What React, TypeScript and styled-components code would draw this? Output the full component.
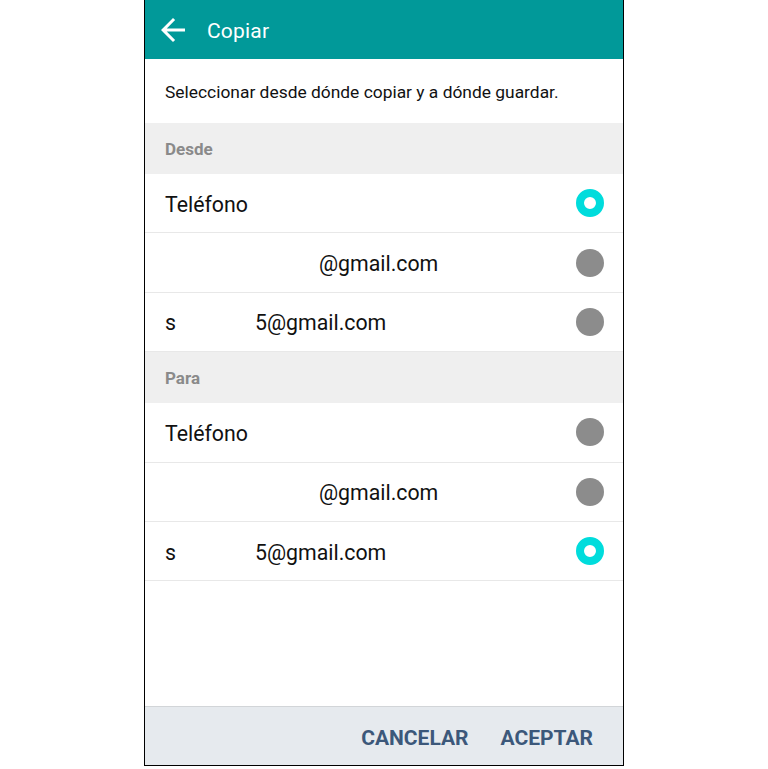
import React, { useState } from 'react';
import styled, { createGlobalStyle } from 'styled-components';

const GlobalStyle = createGlobalStyle`
  html, body {
    margin: 0;
    padding: 0;
    background: #fff;
    font-family: Roboto, "Noto Sans", Arial, sans-serif;
  }
`;

const Frame = styled.div`
  box-sizing: border-box;
  width: 480px;
  height: 766px;
  margin-left: 144px;
  border: 1px solid #000;
  border-top: none;
  display: flex;
  flex-direction: column;
  background: #fff;
`;

const TopBar = styled.header`
  height: 59px;
  background: #019999;
  display: flex;
  align-items: center;
  padding-left: 10px;
  color: #fff;
  flex-shrink: 0;
`;

const BackButton = styled.button`
  border: none;
  background: none;
  padding: 0;
  width: 36px;
  height: 36px;
  display: flex;
  color: #fff;
`;

const Title = styled.h1`
  margin: 2px 0 0 16px;
  font-size: 21px;
  font-weight: 400;
  letter-spacing: 0.2px;
`;

const Intro = styled.p`
  margin: 0;
  height: 64px;
  padding: 1px 20px 0;
  box-sizing: border-box;
  display: flex;
  align-items: center;
  font-size: 17.4px;
  color: #111;
  flex-shrink: 0;
`;

const SectionHeader = styled.div`
  height: 51px;
  background: #efefef;
  padding: 0 20px;
  display: flex;
  align-items: center;
  font-size: 17px;
  font-weight: 700;
  color: #8a8a8a;
  flex-shrink: 0;
`;

const Row = styled.label`
  box-sizing: border-box;
  height: 59.4px;
  border-bottom: 1px solid #e8e8e8;
  padding: 0 19px 0 20px;
  display: flex;
  align-items: center;
  justify-content: space-between;
  font-size: 21.3px;
  color: #111;
  cursor: pointer;
  flex-shrink: 0;
`;

const RowLabel = styled.span`
  padding-top: 2px;
`;

const Redacted = styled.span<{ $w: number }>`
  display: inline-block;
  width: ${({ $w }) => $w}px;
`;

const Radio = styled.span<{ $on: boolean }>`
  box-sizing: border-box;
  width: 28px;
  height: 28px;
  border-radius: 50%;
  background: ${({ $on }) => ($on ? '#fff' : '#8c8c8c')};
  border: ${({ $on }) => ($on ? '8px solid #00dcdc' : 'none')};
`;

const Spacer = styled.div`
  flex: 1;
`;

const Footer = styled.footer`
  box-sizing: border-box;
  height: 59px;
  background: #e6eaee;
  border-top: 1px solid #d2d5d8;
  display: flex;
  align-items: center;
  justify-content: flex-end;
  gap: 32px;
  padding: 3px 30px 0 0;
  flex-shrink: 0;
`;

const ActionButton = styled.button`
  border: none;
  background: none;
  padding: 0;
  font-family: inherit;
  font-size: 21px;
  font-weight: 700;
  color: #3c587a;
  cursor: pointer;
`;

interface Account {
  id: string;
  label: React.ReactNode;
}

const accounts: Account[] = [
  { id: 'phone', label: 'Teléfono' },
  { id: 'gmail1', label: <><Redacted $w={154} />@gmail.com</> },
  { id: 'gmail2', label: <>s<Redacted $w={79} />5@gmail.com</> },
];

const BackIcon = () => (
  <svg width="36" height="36" viewBox="0 0 24 24" fill="currentColor">
    <path d="M20 11H7.83l5.59-5.59L12 4l-8 8 8 8 1.41-1.41L7.83 13H20v-2z" />
  </svg>
);

const App: React.FC = () => {
  const [from, setFrom] = useState('phone');
  const [to, setTo] = useState('gmail2');

  return (
    <>
      <GlobalStyle />
      <Frame>
        <TopBar>
          <BackButton aria-label="Atrás">
            <BackIcon />
          </BackButton>
          <Title>Copiar</Title>
        </TopBar>
        <Intro>Seleccionar desde dónde copiar y a dónde guardar.</Intro>

        <SectionHeader>Desde</SectionHeader>
        {accounts.map(a => (
          <Row key={`from-${a.id}`} onClick={() => setFrom(a.id)}>
            <RowLabel>{a.label}</RowLabel>
            <Radio $on={from === a.id} />
          </Row>
        ))}

        <SectionHeader>Para</SectionHeader>
        {accounts.map(a => (
          <Row key={`to-${a.id}`} onClick={() => setTo(a.id)}>
            <RowLabel>{a.label}</RowLabel>
            <Radio $on={to === a.id} />
          </Row>
        ))}

        <Spacer />
        <Footer>
          <ActionButton>CANCELAR</ActionButton>
          <ActionButton>ACEPTAR</ActionButton>
        </Footer>
      </Frame>
    </>
  );
};

export default App;
